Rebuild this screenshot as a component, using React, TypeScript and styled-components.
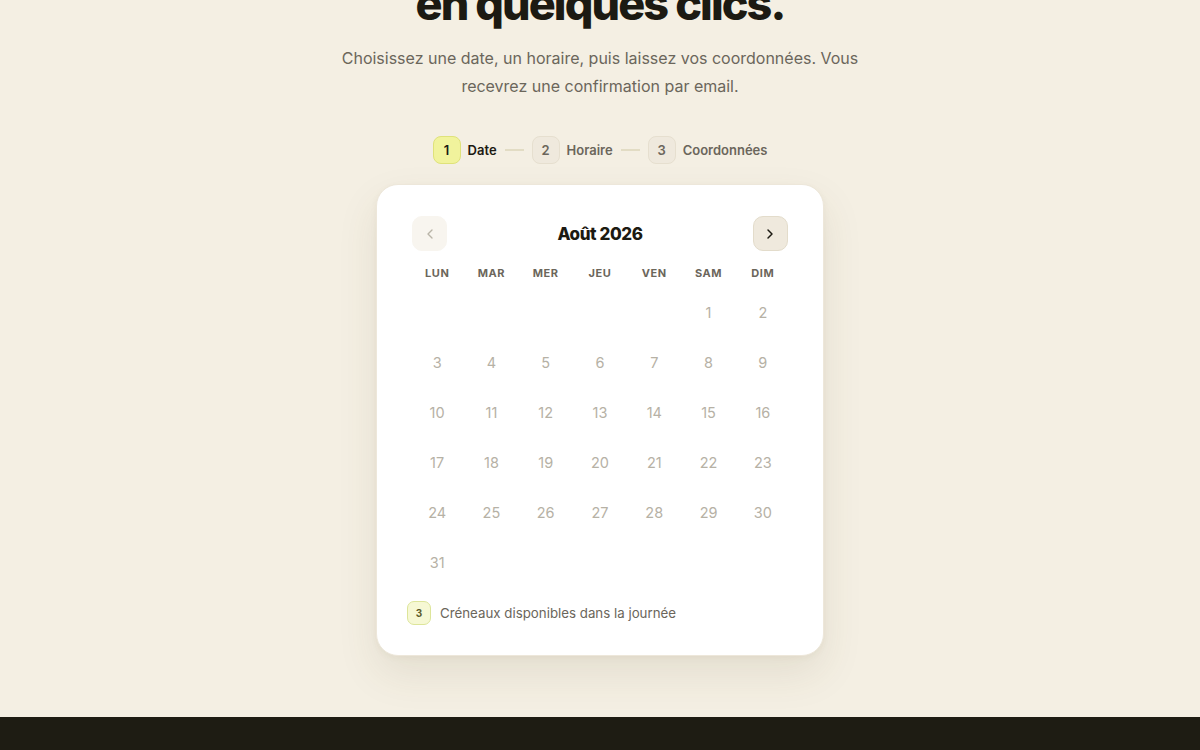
import React from "react";
import styled, { createGlobalStyle } from "styled-components";
import { ChevronLeft, ChevronRight } from "lucide-react";

const Global = createGlobalStyle`
  html, body { margin: 0; padding: 0; background: #f4efe3; }
  body { font-family: Inter, "Noto Sans", sans-serif; color: #1c1a12; overflow: hidden; }
  * { box-sizing: border-box; }
`;

const Page = styled.div`
  display: flex;
  flex-direction: column;
  min-height: 750px;
`;

const Section = styled.section`
  display: flex;
  flex-direction: column;
  align-items: center;
  padding-bottom: 61px;
`;

const Title = styled.h1`
  margin: -22px 0 0;
  font-family: Inter, sans-serif;
  font-weight: 800;
  font-size: 45px;
  line-height: 52px;
  letter-spacing: -1.9px;
  text-align: center;
  color: #1c1a12;
`;

const Lead = styled.p`
  margin: 14px 0 0;
  max-width: 540px;
  font-size: 16px;
  line-height: 28px;
  color: #6b665b;
  text-align: center;
`;

const Steps = styled.div`
  margin-top: 36px;
  display: flex;
  align-items: center;
  gap: 7px;
`;

const StepBadge = styled.span<{ $active?: boolean }>`
  width: 28px;
  height: 28px;
  border-radius: 8px;
  display: inline-flex;
  align-items: center;
  justify-content: center;
  font-size: 13px;
  font-weight: 600;
  background: ${(p) => (p.$active ? "#f1f39c" : "#efe9dd")};
  border: 1px solid ${(p) => (p.$active ? "#dfe27a" : "#e6dfcf")};
  color: ${(p) => (p.$active ? "#1c1a12" : "#6b665b")};
`;

const StepLabel = styled.span<{ $active?: boolean }>`
  font-size: 13px;
  font-weight: 600;
  color: ${(p) => (p.$active ? "#1c1a12" : "#6b665b")};
`;

const Connector = styled.span`
  width: 19px;
  height: 2px;
  background: #e2dcc4;
  margin: 0 1px;
`;

const Card = styled.div`
  margin-top: 20px;
  width: 448px;
  background: #ffffff;
  border-radius: 22px;
  border: 1px solid #ede7da;
  box-shadow: 0 18px 40px rgba(90, 75, 40, 0.1), 0 2px 6px rgba(90, 75, 40, 0.05);
  padding: 31px 33px 30px;
`;

const Header = styled.div`
  display: flex;
  align-items: center;
  justify-content: space-between;
  padding: 0 2px;
`;

const NavButton = styled.button<{ $disabled?: boolean }>`
  width: 35px;
  height: 35px;
  border-radius: 10px;
  display: inline-flex;
  align-items: center;
  justify-content: center;
  padding: 0;
  cursor: pointer;
  background: ${(p) => (p.$disabled ? "#f8f5ef" : "#efe9dd")};
  border: 1px solid ${(p) => (p.$disabled ? "#f8f5ef" : "#e3dccb")};
  color: ${(p) => (p.$disabled ? "#b9b4a8" : "#1c1a12")};
`;

const Month = styled.div`
  font-size: 17px;
  font-weight: 800;
  letter-spacing: -0.4px;
  color: #1c1a12;
`;

const Grid = styled.div`
  display: grid;
  grid-template-columns: repeat(7, 1fr);
`;

const WeekGrid = styled(Grid)`
  margin-top: 15px;
`;

const WeekDay = styled.div`
  text-align: center;
  font-size: 11px;
  font-weight: 700;
  letter-spacing: 0.6px;
  line-height: 14px;
  color: #6b665b;
`;

const DayGrid = styled(Grid)`
  margin-top: 9px;
  grid-auto-rows: 46px;
  row-gap: 4.2px;
`;

const Day = styled.div`
  display: flex;
  align-items: center;
  justify-content: center;
  font-size: 14.5px;
  color: #b6b1a5;
`;

const Legend = styled.div`
  margin-top: 15px;
  display: flex;
  align-items: center;
  gap: 9px;
  margin-left: -3px;
`;

const LegendBadge = styled.span`
  width: 24px;
  height: 24px;
  border-radius: 7px;
  display: inline-flex;
  align-items: center;
  justify-content: center;
  font-size: 10px;
  font-weight: 700;
  background: #f6f8d4;
  border: 1px solid #dde59a;
  color: #5a5a2a;
`;

const LegendText = styled.span`
  font-size: 13.3px;
  color: #6b665b;
`;

const Footer = styled.footer`
  flex: 1;
  background: #1e1c13;
  min-height: 40px;
`;

const weekdays = ["LUN", "MAR", "MER", "JEU", "VEN", "SAM", "DIM"];
const offset = 5;
const days: (number | null)[] = [
  ...Array.from({ length: offset }, () => null),
  ...Array.from({ length: 31 }, (_, i) => i + 1),
];

export default function App() {
  return (
    <Page>
      <Global />
      <Section>
        <Title>en quelques clics.</Title>
        <Lead>
          Choisissez une date, un horaire, puis laissez vos coordonnées. Vous
          recevrez une confirmation par email.
        </Lead>
        <Steps>
          <StepBadge $active>1</StepBadge>
          <StepLabel $active>Date</StepLabel>
          <Connector />
          <StepBadge>2</StepBadge>
          <StepLabel>Horaire</StepLabel>
          <Connector />
          <StepBadge>3</StepBadge>
          <StepLabel>Coordonnées</StepLabel>
        </Steps>
        <Card>
          <Header>
            <NavButton $disabled aria-label="Mois précédent">
              <ChevronLeft size={16} strokeWidth={2} />
            </NavButton>
            <Month>Août 2026</Month>
            <NavButton aria-label="Mois suivant">
              <ChevronRight size={16} strokeWidth={2.2} />
            </NavButton>
          </Header>
          <WeekGrid>
            {weekdays.map((w) => (
              <WeekDay key={w}>{w}</WeekDay>
            ))}
          </WeekGrid>
          <DayGrid>
            {days.map((d, i) => (
              <Day key={i}>{d ?? ""}</Day>
            ))}
          </DayGrid>
          <Legend>
            <LegendBadge>3</LegendBadge>
            <LegendText>Créneaux disponibles dans la journée</LegendText>
          </Legend>
        </Card>
      </Section>
      <Footer />
    </Page>
  );
}
